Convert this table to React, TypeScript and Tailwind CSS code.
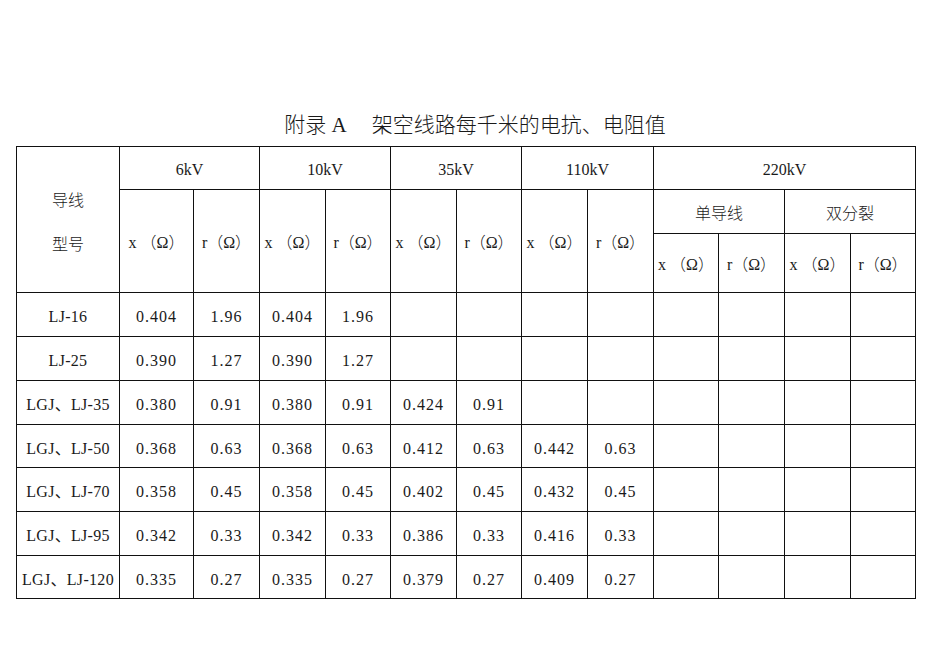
const rows: { name: string; vals: string[] }[] = [
  { name: "LJ-16", vals: ["0.404", "1.96", "0.404", "1.96"] },
  { name: "LJ-25", vals: ["0.390", "1.27", "0.390", "1.27"] },
  { name: "LGJ、LJ-35", vals: ["0.380", "0.91", "0.380", "0.91", "0.424", "0.91"] },
  { name: "LGJ、LJ-50", vals: ["0.368", "0.63", "0.368", "0.63", "0.412", "0.63", "0.442", "0.63"] },
  { name: "LGJ、LJ-70", vals: ["0.358", "0.45", "0.358", "0.45", "0.402", "0.45", "0.432", "0.45"] },
  { name: "LGJ、LJ-95", vals: ["0.342", "0.33", "0.342", "0.33", "0.386", "0.33", "0.416", "0.33"] },
  { name: "LGJ、LJ-120", vals: ["0.335", "0.27", "0.335", "0.27", "0.379", "0.27", "0.409", "0.27"] },
];

const rowHeights = ["h-[44px]", "h-[44px]", "h-[44px]", "h-[43px]", "h-[44px]", "h-[44px]", "h-[43px]"];

const colWidths = [103, 74, 66, 66, 65, 66, 65, 66, 66, 65, 66, 66, 65];

const cell = "border border-[#111] text-center align-middle px-0 pb-0 pt-[4px] font-light";
const dataCell = "border border-[#111] text-center align-middle px-0 pb-0 pt-[5px] tracking-[1px]";
const nameCell = "border border-[#111] text-center align-middle px-0 pb-0 pt-[5px] tracking-[0.3px]";

const X = () => <span>x （Ω）</span>;
const R = () => <span>r（Ω）</span>;

export default function App() {
  return (
    <div className="min-h-[672px] w-[950px] bg-white pt-[111px] font-['Liberation_Serif','Noto_Sans_CJK_SC',serif] text-[#1a1a1a]">
      <h1 className="mb-[7px] h-[28px] text-center text-[21px] leading-[28px] font-light">
        附录 A　 架空线路每千米的电抗、电阻值
      </h1>

      <table className="ml-[16px] w-[899px] table-fixed border-collapse border border-[#111] text-[16px]">
        <colgroup>
          {colWidths.map((w, i) => (
            <col key={i} style={{ width: w }} />
          ))}
        </colgroup>
        <thead>
          <tr className="h-[43px]">
            <th rowSpan={3} className={cell}>
              <div className="flex flex-col items-center gap-[20px] pt-[2px]">
                <span>导线</span>
                <span>型号</span>
              </div>
            </th>
            <th colSpan={2} className={cell}>6kV</th>
            <th colSpan={2} className={cell}>10kV</th>
            <th colSpan={2} className={cell}>35kV</th>
            <th colSpan={2} className={cell}>110kV</th>
            <th colSpan={4} className={cell}>220kV</th>
          </tr>
          <tr className="h-[44px]">
            <th rowSpan={2} className={cell}><X /></th>
            <th rowSpan={2} className={cell}><R /></th>
            <th rowSpan={2} className={cell}><X /></th>
            <th rowSpan={2} className={cell}><R /></th>
            <th rowSpan={2} className={cell}><X /></th>
            <th rowSpan={2} className={cell}><R /></th>
            <th rowSpan={2} className={cell}><X /></th>
            <th rowSpan={2} className={cell}><R /></th>
            <th colSpan={2} className={cell}>单导线</th>
            <th colSpan={2} className={cell}>双分裂</th>
          </tr>
          <tr className="h-[59px]">
            <th className={cell}><X /></th>
            <th className={cell}><R /></th>
            <th className={cell}><X /></th>
            <th className={cell}><R /></th>
          </tr>
        </thead>
        <tbody>
          {rows.map((row, i) => (
            <tr key={row.name} className={rowHeights[i]}>
              <td className={nameCell}>{row.name}</td>
              {Array.from({ length: 12 }).map((_, j) => (
                <td key={j} className={dataCell}>
                  {row.vals[j] ?? ""}
                </td>
              ))}
            </tr>
          ))}
        </tbody>
      </table>
    </div>
  );
}
